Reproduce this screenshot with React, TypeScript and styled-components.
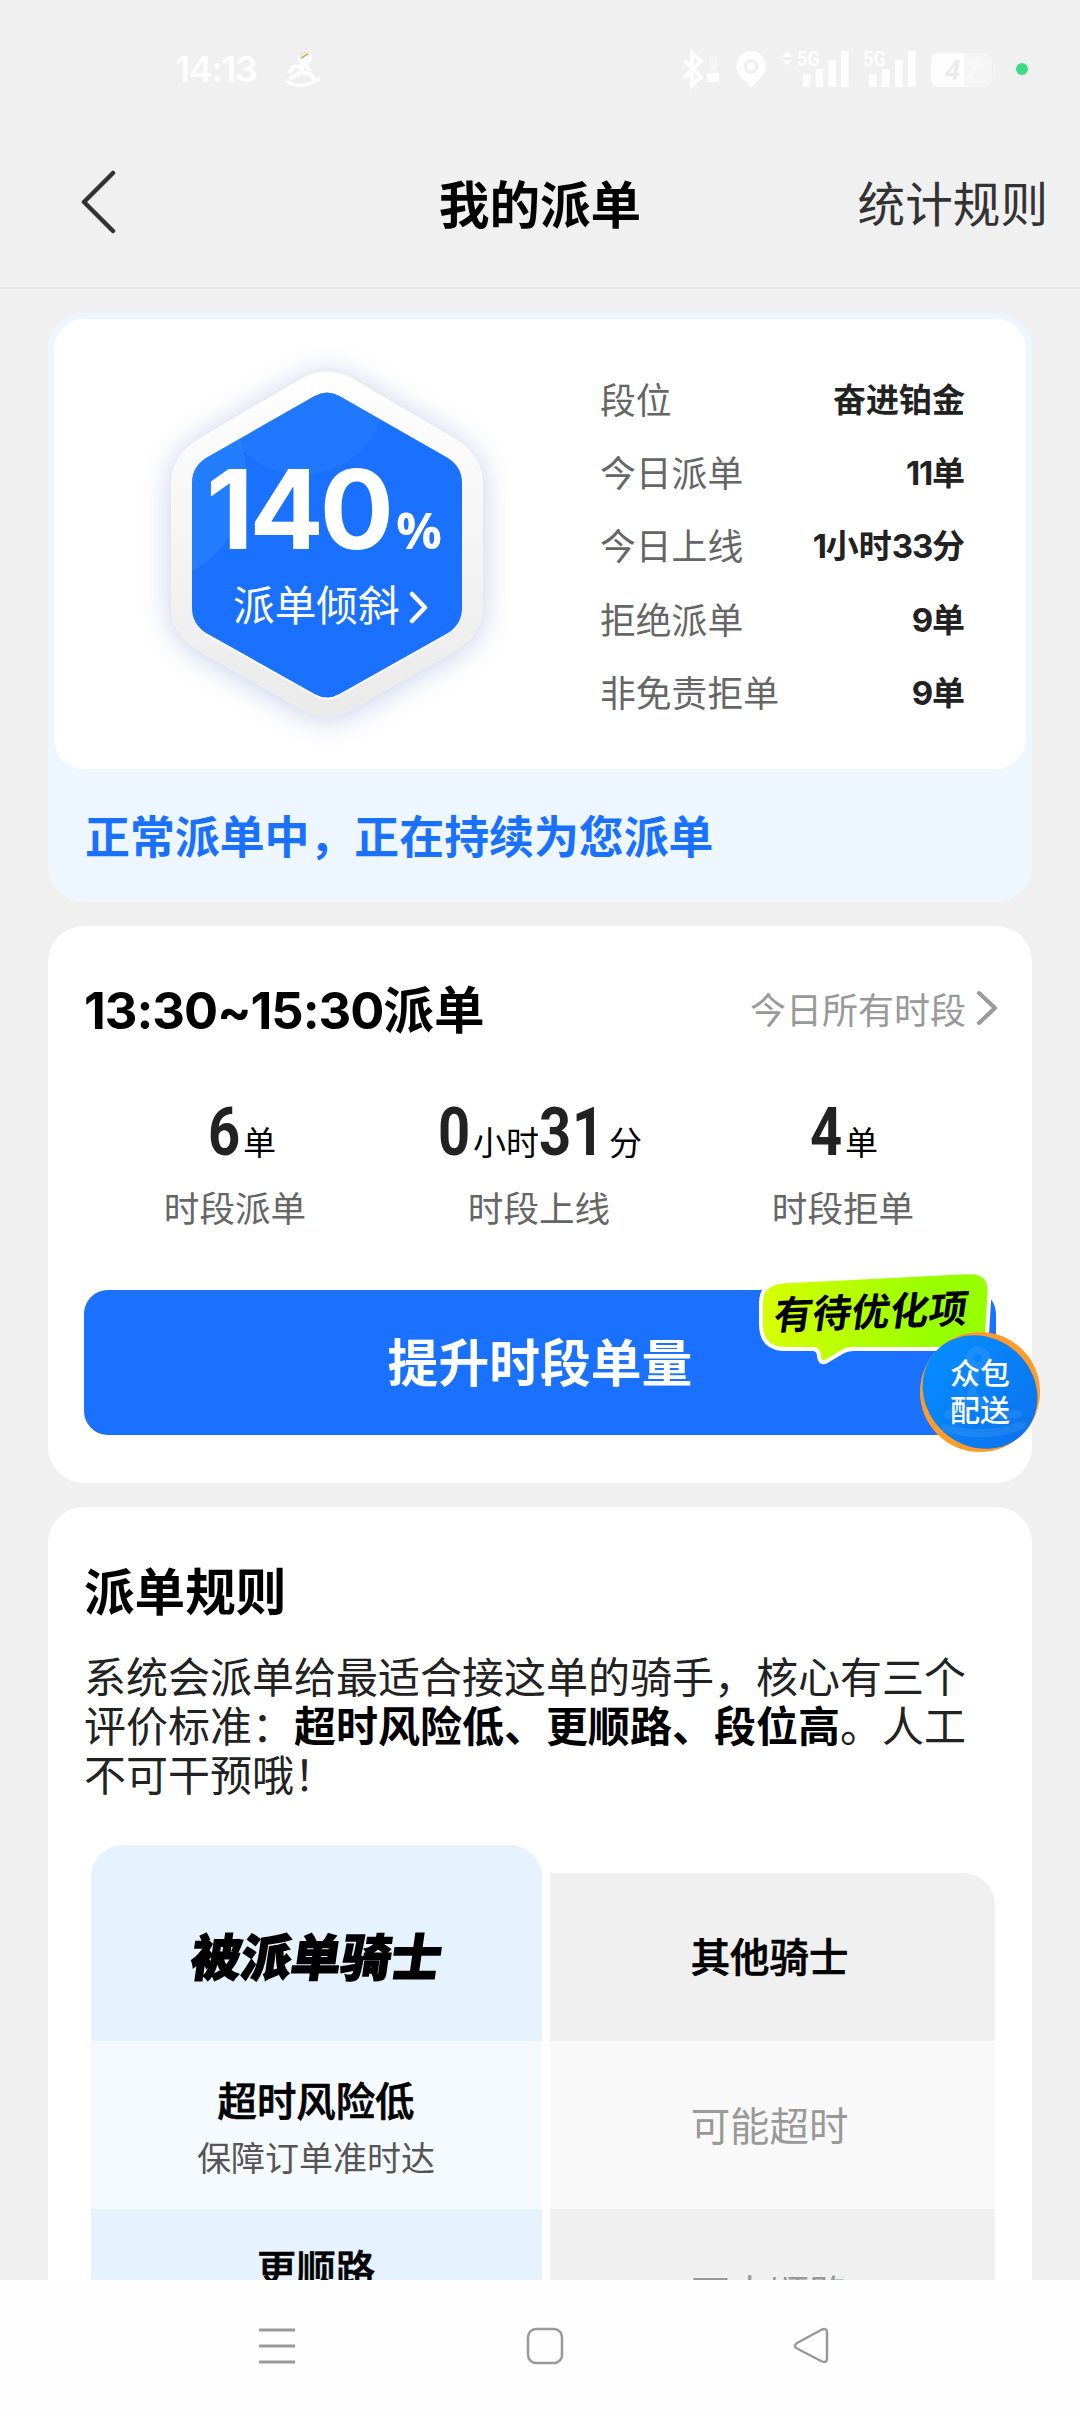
import React from 'react';
import styled, { createGlobalStyle, css } from 'styled-components';

const GlobalStyle = createGlobalStyle`
  *, *::before, *::after { box-sizing: border-box; }
  html, body { margin: 0; padding: 0; background: #f0f0f0; }
  body { font-family: Roboto, 'Noto Sans CJK SC', sans-serif; }
`;

const Screen = styled.div`
  width: 1080px;
  height: 2412px;
  display: flex;
  flex-direction: column;
  background: #f0f0f0;
  overflow: hidden;
  white-space: nowrap;
`;

const StatusBar = styled.header`
  height: 138px;
  flex: none;
  display: flex;
  align-items: center;
  padding: 0 52px 0 175px;
  color: rgba(255, 255, 255, 0.9);
`;

const Clock = styled.div`
  font-family: Inter, sans-serif;
  font-size: 36px;
  line-height: 40px;
  font-weight: 600;
  letter-spacing: -1.5px;
  width: 108px;
`;

const StatusIcons = styled.div`
  margin-left: auto;
  height: 44px;
`;

const TitleBar = styled.nav`
  height: 151px;
  flex: none;
  display: grid;
  grid-template-columns: 240px 1fr 240px;
  align-items: center;
  padding: 0 32px 22px 79px;
  border-bottom: 2px solid #e5e5e5;
`;

const PageTitle = styled.h1`
  margin: 10px 0 0;
  font-size: 50.6px;
  line-height: 64px;
  font-weight: 700;
  text-align: center;
  color: #000;
  padding-right: 47px;
`;

const RulesLink = styled.a`
  margin-top: 8px;
  font-size: 47.6px;
  line-height: 60px;
  color: #333;
  text-align: right;
`;

const Content = styled.main`
  flex: 1;
  min-height: 0;
  overflow: hidden;
  display: flex;
  flex-direction: column;
  gap: 24px;
  padding: 24px 48px 0;
`;

const SummaryCard = styled.section`
  flex: none;
  height: 589px;
  border-radius: 36px;
  background: #eef7ff;
  padding: 6px;
`;

const SummaryBody = styled.div`
  height: 450px;
  border-radius: 30px;
  background: #fff;
  display: flex;
`;

const HexBadge = styled.div`
  position: relative;
  width: 546px;
  height: 450px;
`;

const HexArt = styled.svg`
  display: block;
`;

const HexContent = styled.div`
  position: absolute;
  inset: 131px auto auto 152px;
  color: #fff;
`;

const HexNumber = styled.div`
  display: flex;
  align-items: baseline;
  height: 118px;
  font-family: Inter, sans-serif;
  font-weight: 700;
  font-size: 110px;
  line-height: 118px;
  letter-spacing: -4px;
`;

const Percent = styled.span`
  font-family: 'Open Sans', sans-serif;
  font-size: 51px;
  letter-spacing: 0;
  margin-left: 6px;
`;

const HexCaption = styled.div`
  display: flex;
  align-items: center;
  gap: 9px;
  margin: 14px 0 0 27px;
  font-size: 41.7px;
  line-height: 50px;
`;

const InfoList = styled.dl`
  margin: 0;
  padding: 42px 61px 0 0;
  flex: 1;
`;

const InfoRow = styled.div`
  height: 73.3px;
  display: flex;
  align-items: center;
  justify-content: space-between;
`;

const InfoLabel = styled.dt`
  font-size: 35.8px;
  color: #666;
`;

const InfoValue = styled.dd`
  margin: 0;
  font-size: 33px;
  font-weight: 700;
  color: #222;
`;

const InfoNumber = styled.span`
  font-family: Inter, sans-serif;
  letter-spacing: -1.2px;
`;

const DispatchState = styled.p`
  margin: 0;
  padding: 3px 0 0 31px;
  font-size: 44.9px;
  line-height: 134px;
  font-weight: 700;
  color: #1a70ff;
`;

const PeriodCard = styled.section`
  flex: none;
  height: 557px;
  border-radius: 36px;
  background: #fff;
  padding: 0 36px;
  position: relative;
`;

const PeriodHeader = styled.div`
  display: flex;
  align-items: center;
  justify-content: space-between;
  height: 168px;
`;

const SectionTitle = styled.h2`
  margin: 3px 0 0;
  font-size: 50.6px;
  line-height: 64px;
  font-weight: 700;
  color: #000;
`;

const PeriodRange = styled.span`
  font-family: Inter, sans-serif;
  letter-spacing: -1px;
`;

const AllPeriods = styled.a`
  display: flex;
  align-items: center;
  gap: 10px;
  margin: -5px -2px 0 0;
  font-size: 36px;
  color: #999;
`;

const Stats = styled.div`
  display: grid;
  grid-template-columns: repeat(3, 304px);
  height: 196px;
`;

const Stat = styled.div`
  display: flex;
  flex-direction: column;
  align-items: center;
`;

const StatValue = styled.div<{ $shift?: number }>`
  display: flex;
  align-items: baseline;
  height: 92px;
  line-height: 78px;
  margin-left: ${(p) => p.$shift ?? 0}px;
`;

const Digits = styled.span<{ $width: number }>`
  display: inline-block;
  width: ${(p) => p.$width}px;
  font-size: 66px;
  font-weight: 700;
  color: #222;
  letter-spacing: 1px;
  transform: scaleX(0.85);
  transform-origin: 0 50%;
`;

const Unit = styled.span`
  font-size: 33px;
  color: #000;
`;

const StatLabel = styled.div`
  font-size: 35.6px;
  line-height: 48px;
  margin-left: -2px;
  color: #666;
`;

const BoostButton = styled.button`
  display: block;
  width: 100%;
  height: 145px;
  border: 0;
  border-radius: 24px;
  background: #1a70ff;
  color: #fff;
  font: 700 50.8px/64px Roboto, 'Noto Sans CJK SC', sans-serif;
  padding: 5px 0 0;
`;

const FloatingBadge = styled.div`
  position: absolute;
  left: 706px;
  top: 338px;
  width: 290px;
  height: 192px;
`;

const BubbleText = styled.span`
  position: absolute;
  left: 20px;
  top: 23px;
  font-size: 38.8px;
  line-height: 52px;
  font-weight: 700;
  color: #000;
  transform: rotate(-2deg) skewX(-10deg);
`;

const CrowdText = styled.span`
  position: absolute;
  left: 196px;
  top: 91px;
  font-size: 30px;
  line-height: 37px;
  font-weight: 500;
  color: #fff;
  white-space: pre-line;
`;

const RulesCard = styled.section`
  flex: none;
  height: 900px;
  border-radius: 36px 36px 0 0;
  background: #fff;
  padding: 52px 36px 0;
`;

const RulesText = styled.p`
  margin: 28px 0 44px;
  font-size: 42px;
  line-height: 49px;
  color: #222;
  white-space: pre-line;
  strong { color: #000; font-weight: 700; }
`;

const Compare = styled.div`
  display: grid;
  grid-template-columns: 451px 445px;
  column-gap: 8px;
  align-items: end;
  padding-left: 7px;
`;

const cell = css`
  display: flex;
  flex-direction: column;
  align-items: center;
  justify-content: center;
`;

const semibold = css`
  font-weight: 500;
  color: #000;
  -webkit-text-stroke: 0.7px #000;
`;

const ChosenHead = styled.div`
  ${cell}
  height: 196px;
  padding-top: 22px;
  border-radius: 32px 32px 0 0;
  background: #e6f3ff;
  font-size: 50px;
  font-weight: 900;
  color: #000;
  -webkit-text-stroke: 1.5px #000;
  span { transform: skewX(-8deg); }
`;

const OtherHead = styled.div`
  ${cell}
  ${semibold}
  height: 168px;
  padding: 0 6px 5px 0;
  border-radius: 0 32px 0 0;
  background: #f0f0f0;
  font-size: 39.4px;
`;

const ChosenCell = styled.div<{ $tinted?: boolean }>`
  ${cell}
  height: 168px;
  padding: 12px 1px 0 0;
  background: ${(p) => (p.$tinted ? '#e6f3ff' : '#f5faff')};
`;

const ChosenTitle = styled.strong`
  ${semibold}
  font-size: 39.4px;
  line-height: 56px;
`;

const ChosenNote = styled.small`
  height: 56px;
  font-size: 34px;
  line-height: 56px;
  color: #555;
`;

const OtherCell = styled.div<{ $tinted?: boolean }>`
  ${cell}
  height: 168px;
  padding: 0 6px 4px 0;
  background: ${(p) => (p.$tinted ? '#f0f0f0' : '#f9f9f9')};
  font-size: 39.4px;
  color: #999;
`;

const SystemNav = styled.footer`
  flex: none;
  height: 132px;
  background: #fefefe;
  display: flex;
  align-items: center;
  gap: 228px;
  padding-left: 257px;
`;

const Chevron = ({ w, h, stroke, color, left }: { w: number; h: number; stroke: number; color: string; left?: boolean }) => (
  <svg width={w} height={h} fill="none" stroke={color} strokeWidth={stroke} strokeLinecap="round" strokeLinejoin="round">
    <path d={left ? `M${w - 3} 3L5 ${h / 2}L${w - 3} ${h - 3}` : `M3 3L${w - 3} ${h / 2}L3 ${h - 3}`} />
  </svg>
);

const Runner = () => (
  <svg width="40" height="40" viewBox="0 0 40 40" fill="none" stroke="#fff" strokeLinecap="round" strokeLinejoin="round">
    <circle cx="22" cy="9" r="7" fill="#fff" stroke="none" />
    <path d="M18 9L25 5" stroke="#d9a878" strokeWidth="1.500" />
    <path d="M17 6q3-4 8-2" stroke="#f6d9a8" strokeWidth="1.500" />
    <path d="M20 17L17 24L8 29M18 23L27 25L31 30M19 17L10 18L7 23M22 16L26 20" strokeWidth="4" />
    <path d="M4 32q8 6 17 4t15-6" strokeWidth="3" />
  </svg>
);

const bars = [13, 18, 27, 36];

const StatusGlyphs = () => (
  <svg width="350" height="44" viewBox="678 47 350 44" fill="#fff">
    <g opacity=".88">
      <path d="M684 60L701 77L692 85V53L701 61L684 78" fill="none" stroke="#fff" strokeWidth="4" />
      <rect x="707" y="73" width="12" height="9" />
      <rect x="709" y="56" width="8" height="15" opacity=".3" />
      <path fillRule="evenodd" d="M751 51a15 15 0 0 0-15 15c0 9 9 14 15 22c6-8 15-13 15-22a15 15 0 0 0-15-15zm0 8a7.500 7.500 0 1 1 0 15a7.500 7.500 0 0 1 0-15z" />
      <circle cx="751" cy="66.500" r="4" />
      <path d="M782 57l5-6 5 6zM782 60l5 5 5-5z" />
      <text x="797" y="66" fontSize="21" fontWeight="700" textLength="23" lengthAdjust="spacingAndGlyphs">5G</text>
      <text x="863" y="66" fontSize="21" fontWeight="700" textLength="23" lengthAdjust="spacingAndGlyphs">5G</text>
      {bars.map((h, i) => <rect key={i} x={803 + i * 12.7} y={87 - h} width="7.500" height={h} />)}
      {bars.map((h, i) => <rect key={i} x={869 + i * 13} y={87 - h} width="7.500" height={h} />)}
      <rect x="931" y="53" width="61" height="34" rx="8" opacity=".35" />
      <path d="M994 64q3 6 0 12z" opacity=".5" />
      <path d="M939 53H964V87H939a8 8 0 0 1-8-8V61a8 8 0 0 1 8-8z" />
      <text x="945" y="80" fontSize="28" fontWeight="700" fontStyle="italic" fill="#ebebeb">4</text>
      <text x="964" y="80" fontSize="28" fontWeight="700" fontStyle="italic" fill="#fff" opacity=".4">7</text>
    </g>
    <circle cx="1022" cy="69" r="6" fill="#3ddc84" />
  </svg>
);

const RIM = 'M236 57Q259 46 282 57L388 119Q415 136 415 164V288Q415 314 388 331L282 391Q259 403 236 391L130 331Q103 314 103 288V164Q103 136 130 119Z';
const FACE = 'M246.500 76Q259 69 271.500 76L380 138Q394 147 394 163V288Q394 304 380 313L271.500 374Q259 381 246.500 374L138 313Q124 304 124 288V163Q124 147 138 138Z';

const Hexagon = () => (
  <HexArt width="546" height="450" viewBox="0 0 546 450">
    <defs>
      <linearGradient id="rim" x1="0" y1="0" x2="0" y2="1">
        <stop offset="0" stopColor="#fff" />
        <stop offset="1" stopColor="#eaeaea" />
      </linearGradient>
      <clipPath id="face"><path d={FACE} /></clipPath>
      <filter id="glow" x="-30%" y="-30%" width="160%" height="160%">
        <feGaussianBlur stdDeviation="15" />
      </filter>
    </defs>
    <g transform="translate(14 1)">
      <path d={RIM} fill="#4a5cb8" opacity=".3" filter="url(#glow)" transform="translate(0 2)" />
      <path d={RIM} fill="url(#rim)" />
      <path d={FACE} fill="#fff" transform="translate(0 2)" />
      <g clipPath="url(#face)">
        <rect x="120" y="65" width="280" height="315" fill="#1a70ff" />
        <circle cx="234" cy="71" r="84" fill="#3290ff" opacity=".28" />
        <circle cx="72" cy="158" r="107" fill="#3290ff" opacity=".4" />
      </g>
    </g>
  </HexArt>
);

const info = [
  ['段位', '奋进铂金'],
  ['今日派单', '11单'],
  ['今日上线', '1小时33分'],
  ['拒绝派单', '9单'],
  ['非免责拒单', '9单'],
];

const withNumbers = (value: string) =>
  value.split(/(\d+)/).map((part, i) => (/^\d+$/.test(part) ? <InfoNumber key={i}>{part}</InfoNumber> : part));

export default function App() {
  return (
    <Screen>
      <GlobalStyle />
      <StatusBar>
        <Clock>14:13</Clock>
        <Runner />
        <StatusIcons><StatusGlyphs /></StatusIcons>
      </StatusBar>
      <TitleBar>
        <Chevron w={37} h={64} stroke={4.5} color="#333" left />
        <PageTitle>我的派单</PageTitle>
        <RulesLink>统计规则</RulesLink>
      </TitleBar>
      <Content>
        <SummaryCard>
          <SummaryBody>
            <HexBadge>
              <Hexagon />
              <HexContent>
                <HexNumber>140<Percent>%</Percent></HexNumber>
                <HexCaption>派单倾斜<Chevron w={19} h={33} stroke={4.5} color="#fff" /></HexCaption>
              </HexContent>
            </HexBadge>
            <InfoList>
              {info.map(([label, value]) => (
                <InfoRow key={label}>
                  <InfoLabel>{label}</InfoLabel>
                  <InfoValue>{withNumbers(value)}</InfoValue>
                </InfoRow>
              ))}
            </InfoList>
          </SummaryBody>
          <DispatchState>正常派单中，正在持续为您派单</DispatchState>
        </SummaryCard>

        <PeriodCard>
          <PeriodHeader>
            <SectionTitle><PeriodRange>13:30~15:30</PeriodRange>派单</SectionTitle>
            <AllPeriods>今日所有时段<Chevron w={22} h={36} stroke={4} color="#999" /></AllPeriods>
          </PeriodHeader>
          <Stats>
            <Stat>
              <StatValue $shift={12}><Digits $width={35}>6</Digits><Unit>单</Unit></StatValue>
              <StatLabel>时段派单</StatLabel>
            </Stat>
            <Stat>
              <StatValue><Digits $width={35}>0</Digits><Unit>小时</Unit><Digits $width={70}>31</Digits><Unit>分</Unit></StatValue>
              <StatLabel>时段上线</StatLabel>
            </Stat>
            <Stat>
              <StatValue><Digits $width={35}>4</Digits><Unit>单</Unit></StatValue>
              <StatLabel>时段拒单</StatLabel>
            </Stat>
          </Stats>
          <BoostButton>提升时段单量</BoostButton>
          <FloatingBadge>
            <svg width="290" height="192" viewBox="754 1264 290 192">
              <defs>
                <linearGradient id="lime"><stop offset="0" stopColor="#d8ff00" /><stop offset=".75" stopColor="#98ff00" /></linearGradient>
                <linearGradient id="orb"><stop offset="0" stopColor="#068cff" /><stop offset="1" stopColor="#0b75ee" /></linearGradient>
              </defs>
              <path d="M782 1281.500L970 1272Q991 1272 989.500 1294L987 1334Q985 1349 970 1349H853Q847 1349 842 1352L827 1361Q820 1365 819 1356Q819 1349 812 1349H782Q761 1347 761 1324V1303Q761 1284 782 1281.500Z" fill="url(#lime)" stroke="#fff" strokeWidth="4" />
              <circle cx="980" cy="1392" r="60" fill="#ff9b28" />
              <ellipse cx="980" cy="1392" rx="60" ry="54" transform="rotate(42 980 1392)" fill="url(#orb)" />
              <g fill="none" stroke="#fff" opacity=".07" strokeWidth="8" strokeLinecap="round">
                <circle cx="978" cy="1358" r="8" />
                <path d="M976 1372L970 1400L948 1415M972 1396L1000 1415L1018 1414M946 1428Q985 1440 1022 1425" />
              </g>
            </svg>
            <BubbleText>有待优化项</BubbleText>
            <CrowdText>{'众包\n配送'}</CrowdText>
          </FloatingBadge>
        </PeriodCard>

        <RulesCard>
          <SectionTitle>派单规则</SectionTitle>
          <RulesText>
            {'系统会派单给最适合接这单的骑手，核心有三个\n评价标准：'}
            <strong>超时风险低、更顺路、段位高</strong>
            {'。人工\n不可干预哦！'}
          </RulesText>
          <Compare>
            <ChosenHead><span>被派单骑士</span></ChosenHead>
            <OtherHead>其他骑士</OtherHead>
            <ChosenCell>
              <ChosenTitle>超时风险低</ChosenTitle>
              <ChosenNote>保障订单准时达</ChosenNote>
            </ChosenCell>
            <OtherCell>可能超时</OtherCell>
            <ChosenCell $tinted>
              <ChosenTitle>更顺路</ChosenTitle>
              <ChosenNote />
            </ChosenCell>
            <OtherCell $tinted>不太顺路</OtherCell>
          </Compare>
        </RulesCard>
      </Content>
      <SystemNav>
        <svg width="40" height="40" stroke="#999" strokeWidth="3"><path d="M2 4H38M2 20H38M2 36H38" /></svg>
        <svg width="40" height="40" fill="none" stroke="#999" strokeWidth="2.500"><rect x="3" y="3" width="34" height="34" rx="8" /></svg>
        <svg width="40" height="40" fill="none" stroke="#999" strokeWidth="2.500" strokeLinejoin="round"><path d="M28 4Q34 1 34 7V32Q34 38 28 35L4 22.500Q0 20 4 17Z" /></svg>
      </SystemNav>
    </Screen>
  );
}
